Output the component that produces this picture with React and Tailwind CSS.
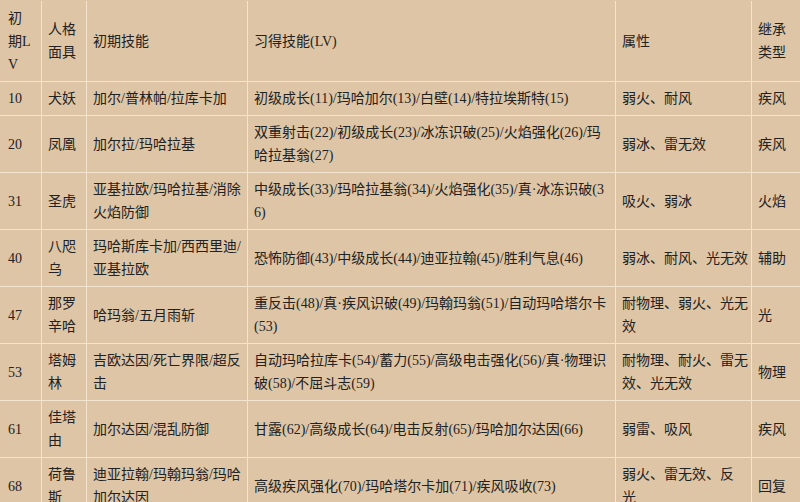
import React from "react";

const headers = ["初期LV", "人格面具", "初期技能", "习得技能(LV)", "属性", "继承类型"];

const rows = [
  ["10", "犬妖", "加尔/普林帕/拉库卡加", "初级成长(11)/玛哈加尔(13)/白壁(14)/特拉埃斯特(15)", "弱火、耐风", "疾风"],
  ["20", "凤凰", "加尔拉/玛哈拉基", "双重射击(22)/初级成长(23)/冰冻识破(25)/火焰强化(26)/玛哈拉基翁(27)", "弱冰、雷无效", "疾风"],
  ["31", "圣虎", "亚基拉欧/玛哈拉基/消除火焰防御", "中级成长(33)/玛哈拉基翁(34)/火焰强化(35)/真·冰冻识破(36)", "吸火、弱冰", "火焰"],
  ["40", "八咫乌", "玛哈斯库卡加/西西里迪/亚基拉欧", "恐怖防御(43)/中级成长(44)/迪亚拉翰(45)/胜利气息(46)", "弱冰、耐风、光无效", "辅助"],
  ["47", "那罗辛哈", "哈玛翁/五月雨斩", "重反击(48)/真·疾风识破(49)/玛翰玛翁(51)/自动玛哈塔尔卡(53)", "耐物理、弱火、光无效", "光"],
  ["53", "塔姆林", "吉欧达因/死亡界限/超反击", "自动玛哈拉库卡(54)/蓄力(55)/高级电击强化(56)/真·物理识破(58)/不屈斗志(59)", "耐物理、耐火、雷无效、光无效", "物理"],
  ["61", "佳塔由", "加尔达因/混乱防御", "甘露(62)/高级成长(64)/电击反射(65)/玛哈加尔达因(66)", "弱雷、吸风", "疾风"],
  ["68", "荷鲁斯", "迪亚拉翰/玛翰玛翁/玛哈加尔达因", "高级疾风强化(70)/玛哈塔尔卡加(71)/疾风吸收(73)", "弱火、雷无效、反\n光", "回复"],
];

// per-column padding, widths live in the grid template
const pads = [
  "pl-[8px] pr-[8px]",
  "pl-[6px] pr-[6px]",
  "pl-[6px] pr-[4px]",
  "pl-[6px] pr-[8px]",
  "pl-[6px] pr-[2px]",
  "pl-[6px] pr-[2px]",
];

const Cell = ({ children, col, head }) => (
  <div
    className={`flex items-center bg-[#dec5a6] py-[5px] break-all whitespace-pre-line ${pads[col]} ${head ? "min-h-[80px]" : ""}`}
  >
    <span>{children}</span>
  </div>
);

export default function App() {
  return (
    <div
      className="h-[502px] w-[800px] overflow-hidden bg-[#dec5a6] pt-px text-[14px] leading-[23px] text-[#222]"
      style={{ fontFamily: '"Liberation Serif", "Noto Sans CJK SC", serif' }}
    >
      <div className="grid grid-cols-[41px_44px_160px_367px_135px_48px] gap-px bg-[#f3e4d1]">
        {headers.map((h, i) => (
          <Cell key={h} col={i} head>
            {h}
          </Cell>
        ))}
        {rows.map((r) =>
          r.map((c, i) => (
            <Cell key={r[0] + "-" + i} col={i}>
              {c}
            </Cell>
          ))
        )}
      </div>
    </div>
  );
}
